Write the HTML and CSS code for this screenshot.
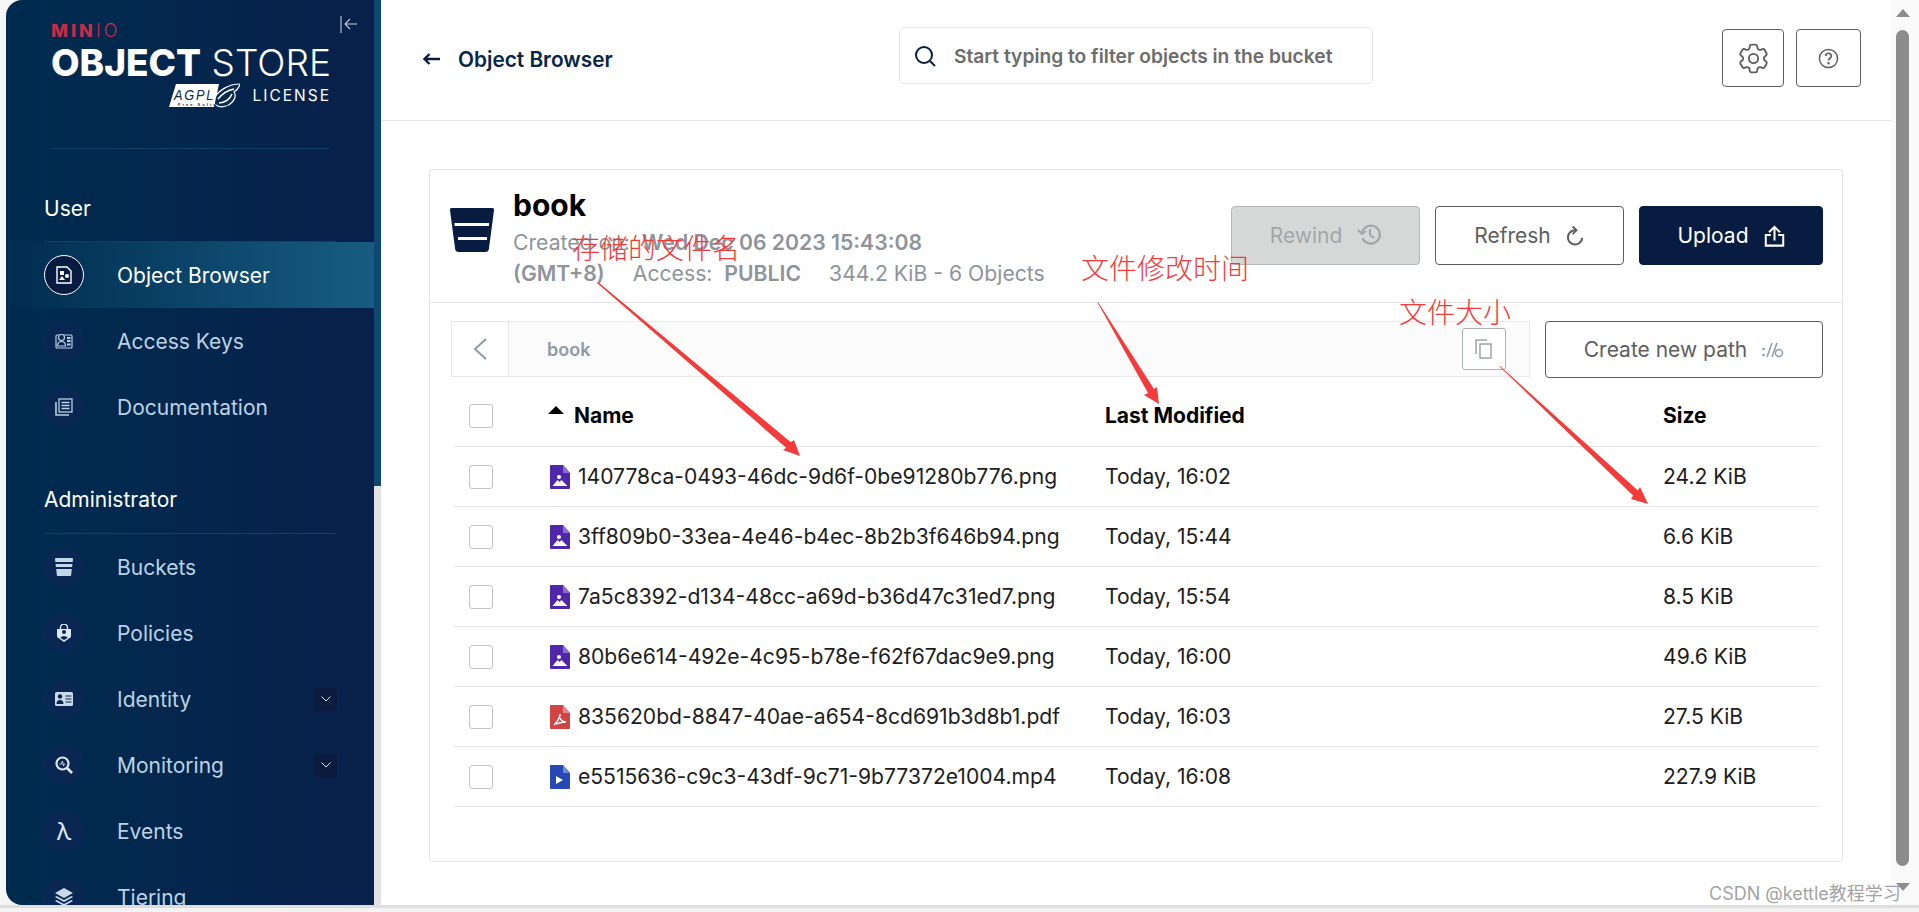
FILE: index.html
```html
<!DOCTYPE html>
<html lang="en">
<head>
    <meta charset="UTF-8">
    <title>MinIO Object Store - book</title>
    <link rel="stylesheet" href="styles.css">
</head>
<body>

<div class="window">
    <div class="app">
        <aside class="sidebar">
            <div class="logo">
                <div class="logo-minio">MIN<span class="logo-io">IO</span></div>
                <div class="logo-title"><b>OBJECT</b> STORE</div>
                <div class="logo-license">
                    <svg class="agpl" viewBox="0 0 71 25">
                        <path d="M43 18C49 7 60 1 71 1C70 5 68 7 65 9C68 13 65 20 57 23C52 25 46 23 43 18Z" fill="#0a2a50" stroke="#fff" stroke-width="1.200"/>
                        <path d="M49 16C54 10 59 7 65 6M50 20C56 20 61 16 63 11" stroke="#fff" stroke-width="1.600" fill="none"/>
                        <polygon points="7,1 50,1 45,24 0,24" fill="#fff"/>
                        <text x="5" y="17" class="agpl-text" textLength="41" lengthAdjust="spacingAndGlyphs">AGPL</text>
                        <text x="9" y="22.500" class="agpl-small">Free Software</text>
                    </svg>
                    <span>LICENSE</span>
                </div>
            </div>
            <button class="collapse">
                <svg viewBox="0 0 18 18" width="18" height="18" fill="none" stroke="#c5ced8" stroke-width="1.100"><path d="M1 1v17M17 9H5M10 4L5 9l5 5"/></svg>
            </button>
            <div class="logo-line"></div>

            <div class="nav-title">User</div>
            <a class="nav-item active">
                <span class="nav-icon">
                    <svg viewBox="0 0 18 18" width="18" height="18"><path d="M2 1h10l4 4v12H2z" fill="none" stroke="#fff" stroke-width="1.400"/><rect x="5" y="5" width="4" height="4" fill="#fff"/><circle cx="12" cy="10" r="2" fill="#fff"/><path d="M7 10l3 4H4z" fill="#fff"/></svg>
                </span>
                Object Browser
            </a>
            <a class="nav-item">
                <span class="nav-icon">
                    <svg viewBox="0 0 18 18" width="18" height="18" fill="none" stroke="#b7cfe2" stroke-width="1.200"><rect x="1" y="3" width="16" height="13" rx="1"/><circle cx="6.500" cy="5.500" r="3" fill="#0a2550"/><path d="M2.500 14c0-3 2-4.500 4-4.500s4 1.500 4 4.500z"/><path d="M12 6h3.500M12 9h3.500M12 12.500h3.500" stroke-width="1.800"/></svg>
                </span>
                Access Keys
            </a>
            <a class="nav-item">
                <span class="nav-icon">
                    <svg viewBox="0 0 18 18" width="18" height="18" fill="none" stroke="#b7cfe2" stroke-width="1.300"><rect x="4" y="1" width="13" height="13"/><path d="M6.500 4.500h8M6.500 7.500h8M6.500 10.500h8"/><path d="M1 4v13h13" stroke-width="1.600"/></svg>
                </span>
                Documentation
            </a>

            <div class="nav-title nav-title-admin">Administrator</div>
            <a class="nav-item">
                <span class="nav-icon">
                    <svg viewBox="0 0 18 18" width="18" height="18" fill="#c3d7e7"><path d="M1 0h16a1 1 0 011 1l-.3 3H.3L0 1a1 1 0 011-1zM.6 6h16.800l-.3 3H.9zM1.200 11h15.600l-.6 6a1 1 0 01-1 1H2.800a1 1 0 01-1-1z"/></svg>
                </span>
                Buckets
            </a>
            <a class="nav-item">
                <span class="nav-icon">
                    <svg viewBox="0 0 18 18" width="18" height="18"><path d="M5.500 5V3.500a3.500 3.500 0 017 0V5" fill="none" stroke="#dbe7f1" stroke-width="1.400"/><path d="M2 5h14v8l-7 5-7-5z" fill="#dbe7f1"/><circle cx="9" cy="8" r="2" fill="#0a2550"/><path d="M5.500 14c0-2.500 7-2.500 7 0l-3.500 2z" fill="#0a2550"/></svg>
                </span>
                Policies
            </a>
            <a class="nav-item">
                <span class="nav-icon">
                    <svg viewBox="0 0 18 14" width="18" height="14"><rect width="18" height="14" rx="1.500" fill="#c9dbe9"/><circle cx="5" cy="4.500" r="2.200" fill="#0a2550"/><path d="M1.500 12c0-3 1.500-4 3.500-4s3.500 1 3.500 4z" fill="#0a2550"/><path d="M10.500 4h6M10.500 7h6M10.500 10h6" stroke="#0a2550" stroke-width="1.100"/></svg>
                </span>
                Identity
                <span class="nav-chevron"><svg viewBox="0 0 10 6" width="10" height="6" fill="none" stroke="#dde8f0" stroke-width="1"><path d="M.5.5L5 5 9.500.5"/></svg></span>
            </a>
            <a class="nav-item">
                <span class="nav-icon">
                    <svg viewBox="0 0 18 18" width="18" height="18" fill="none" stroke="#dbe7f1"><circle cx="7.500" cy="7.500" r="6" stroke-width="2.200"/><path d="M12 12l5 5" stroke-width="2.600"/><path d="M4.500 8h2l1-3 1 5 .8-2h1" stroke-width=".9"/></svg>
                </span>
                Monitoring
                <span class="nav-chevron"><svg viewBox="0 0 10 6" width="10" height="6" fill="none" stroke="#dde8f0" stroke-width="1"><path d="M.5.5L5 5 9.500.5"/></svg></span>
            </a>
            <a class="nav-item">
                <span class="nav-icon nav-lambda">λ</span>
                Events
            </a>
            <a class="nav-item">
                <span class="nav-icon">
                    <svg viewBox="0 0 18 18" width="18" height="18" fill="#c9dbe9"><path d="M9 0l9 5-9 5-9-5z"/><path d="M1.500 8L9 12l7.500-4L18 9l-9 5-9-5z"/><path d="M1.500 12L9 16l7.500-4L18 13l-9 5-9-5z"/></svg>
                </span>
                Tiering
            </a>
        </aside>
        <div class="sidebar-scroll"></div>

        <main class="main">
            <header class="topbar">
                <div class="back">
                    <svg viewBox="0 0 18 12" width="18" height="12" fill="none" stroke="#081c42" stroke-width="2.400"><path d="M17 6H2M6.500 1L1.500 6l5 5"/></svg>
                    <span>Object Browser</span>
                </div>
                <div class="search">
                    <svg viewBox="0 0 22 22" width="22" height="22" fill="none" stroke="#081c42" stroke-width="2"><circle cx="10" cy="10" r="8"/><path d="M16 16l5 5"/></svg>
                    <span>Start typing to filter objects in the bucket</span>
                </div>
                <button class="top-btn gear-btn">
                    <svg viewBox="0 0 24 24" width="37" height="37" fill="none" stroke="#5e5e5e" stroke-width="1.200"><path d="M9.594 3.940c.09-.542.56-.94 1.110-.94h2.593c.55 0 1.020.398 1.110.94l.213 1.281c.063.374.313.686.645.870.074.04.147.083.22.127.324.196.72.257 1.075.124l1.217-.456a1.125 1.125 0 011.370.49l1.296 2.247a1.125 1.125 0 01-.26 1.431l-1.003.827c-.293.24-.438.613-.431.992a6.759 6.759 0 010 .255c-.007.378.138.75.43.99l1.005.828c.424.35.534.954.26 1.430l-1.298 2.247a1.125 1.125 0 01-1.369.491l-1.217-.456c-.355-.133-.75-.072-1.076.124a6.570 6.570 0 01-.22.128c-.331.183-.581.495-.644.869l-.213 1.280c-.09.543-.56.941-1.110.941h-2.594c-.55 0-1.020-.398-1.110-.94l-.213-1.281c-.062-.374-.312-.686-.644-.87a6.520 6.520 0 01-.22-.127c-.325-.196-.72-.257-1.076-.124l-1.217.456a1.125 1.125 0 01-1.369-.49l-1.297-2.247a1.125 1.125 0 01.26-1.431l1.004-.827c.292-.24.437-.613.43-.992a6.932 6.932 0 010-.255c.007-.378-.138-.75-.43-.99l-1.004-.828a1.125 1.125 0 01-.26-1.430l1.297-2.247a1.125 1.125 0 011.370-.491l1.216.456c.356.133.751.072 1.076-.124.072-.044.146-.087.22-.128.332-.183.582-.495.644-.869l.214-1.281z"/><circle cx="12" cy="12" r="3"/></svg>
                </button>
                <button class="top-btn help-btn">
                    <svg viewBox="0 0 22 22" width="21" height="21" fill="none" stroke="#5e5e5e" stroke-width="1.500"><circle cx="11" cy="11" r="9.500"/><path d="M8 8.500a3 3 0 116 0c0 2-3 2.500-3 4.500" stroke-width="1.800"/><circle cx="11" cy="16" r=".6" fill="#5e5e5e"/></svg>
                </button>
            </header>

            <section class="panel">
                <div class="panel-head">
                    <svg class="bucket" viewBox="0 0 44 44" width="44" height="44"><path d="M2 0h40a2 2 0 012 2.300L39 40a4 4 0 01-4 4H9a4 4 0 01-4-4L0 2.300A2 2 0 012 0z" fill="#081c42"/><rect x="4.500" y="15" width="34.500" height="3" fill="#fff"/><rect x="8" y="29" width="29" height="3" fill="#fff"/></svg>
                    <div class="bucket-info">
                        <h1>book</h1>
                        <div class="info-line">Created on:&nbsp; <b>Wed Dec 06 2023 15:43:08</b></div>
                        <div class="info-line"><b>(GMT+8)</b><span class="access">Access:&nbsp; <b>PUBLIC</b></span><span class="usage">344.2 KiB - 6 Objects</span></div>
                    </div>
                    <div class="head-btns">
                        <button class="btn btn-off">Rewind
                            <svg class="rewind-icon" viewBox="0 0 24 22" width="24" height="22" fill="none" stroke="#a3a6a8" stroke-width="2.200"><path d="M5 10a9 9 0 11.5 5"/><path d="M1 7l4 4 4-3" stroke-width="2"/><path d="M13 6v6l4 3" stroke-width="2"/></svg>
                        </button>
                        <button class="btn">Refresh
                            <svg viewBox="0 0 20 22" width="19" height="22" fill="none" stroke="#5e5e5e" stroke-width="2.200"><path d="M17 13a7.500 7.500 0 11-7.500-8"/><path d="M7 1l4 4-4 4" stroke-width="2"/></svg>
                        </button>
                        <button class="btn btn-dark">Upload
                            <svg viewBox="0 0 22 24" width="21" height="22" fill="none" stroke="#fff" stroke-width="2.200"><path d="M11 17V2M5 8l6-6 6 6"/><path d="M7 11H1.500v11.500h19V11H15"/></svg>
                        </button>
                    </div>
                </div>

                <div class="path-row">
                    <div class="crumbs">
                        <span class="crumb-back"><svg viewBox="0 0 16 24" width="16" height="24" fill="none" stroke="#8e9aa5" stroke-width="2"><path d="M14 2L3 12l11 10"/></svg></span>
                        <span class="crumb-name">book</span>
                        <button class="copy-btn">
                            <svg viewBox="0 0 20 20" width="20" height="20" fill="none" stroke="#9aa3ab" stroke-width="1.500"><path d="M2 15V1h11"/><rect x="6" y="5" width="11" height="14"/></svg>
                        </button>
                    </div>
                    <button class="btn btn-path">Create new path
                        <svg viewBox="0 0 22 16" width="22" height="16" fill="none" stroke="#8e9aa5" stroke-width="1.500"><circle cx="1.500" cy="7" r="1.300" fill="#8e9aa5" stroke="none"/><circle cx="1.500" cy="13" r="1.300" fill="#8e9aa5" stroke="none"/><path d="M10 1L5 15M15 1L10 15"/><circle cx="17" cy="11" r="3.500"/></svg>
                    </button>
                </div>

                <div class="objects">
                    <div class="row row-head">
                        <span class="check"></span>
                        <span class="cell-name"><span class="sort-up"></span>Name</span>
                        <span>Last Modified</span>
                        <span>Size</span>
                    </div>
                    <div class="row">
                        <span class="check"></span>
                        <span class="cell-name"><svg class="file" viewBox="0 0 20 24"><path d="M1 0h12l7 8v15a1 1 0 01-1 1H1a1 1 0 01-1-1V1a1 1 0 011-1z" fill="#5027ab"/><path d="M13 0l7 8h-7z" fill="#8a6ed0"/><circle cx="9" cy="12" r="2" fill="#fff"/><path d="M2.500 21l5-6 2 2 2-2 6 6z" fill="#fff"/></svg>140778ca-0493-46dc-9d6f-0be91280b776.png</span>
                        <span>Today, 16:02</span>
                        <span>24.2 KiB</span>
                    </div>
                    <div class="row">
                        <span class="check"></span>
                        <span class="cell-name"><svg class="file" viewBox="0 0 20 24"><path d="M1 0h12l7 8v15a1 1 0 01-1 1H1a1 1 0 01-1-1V1a1 1 0 011-1z" fill="#5027ab"/><path d="M13 0l7 8h-7z" fill="#8a6ed0"/><circle cx="9" cy="12" r="2" fill="#fff"/><path d="M2.500 21l5-6 2 2 2-2 6 6z" fill="#fff"/></svg>3ff809b0-33ea-4e46-b4ec-8b2b3f646b94.png</span>
                        <span>Today, 15:44</span>
                        <span>6.6 KiB</span>
                    </div>
                    <div class="row">
                        <span class="check"></span>
                        <span class="cell-name"><svg class="file" viewBox="0 0 20 24"><path d="M1 0h12l7 8v15a1 1 0 01-1 1H1a1 1 0 01-1-1V1a1 1 0 011-1z" fill="#5027ab"/><path d="M13 0l7 8h-7z" fill="#8a6ed0"/><circle cx="9" cy="12" r="2" fill="#fff"/><path d="M2.500 21l5-6 2 2 2-2 6 6z" fill="#fff"/></svg>7a5c8392-d134-48cc-a69d-b36d47c31ed7.png</span>
                        <span>Today, 15:54</span>
                        <span>8.5 KiB</span>
                    </div>
                    <div class="row">
                        <span class="check"></span>
                        <span class="cell-name"><svg class="file" viewBox="0 0 20 24"><path d="M1 0h12l7 8v15a1 1 0 01-1 1H1a1 1 0 01-1-1V1a1 1 0 011-1z" fill="#5027ab"/><path d="M13 0l7 8h-7z" fill="#8a6ed0"/><circle cx="9" cy="12" r="2" fill="#fff"/><path d="M2.500 21l5-6 2 2 2-2 6 6z" fill="#fff"/></svg>80b6e614-492e-4c95-b78e-f62f67dac9e9.png</span>
                        <span>Today, 16:00</span>
                        <span>49.6 KiB</span>
                    </div>
                    <div class="row">
                        <span class="check"></span>
                        <span class="cell-name"><svg class="file" viewBox="0 0 20 24"><path d="M1 0h12l7 8v15a1 1 0 01-1 1H1a1 1 0 01-1-1V1a1 1 0 011-1z" fill="#d24545"/><path d="M13 0l7 8h-7z" fill="#e58a8a"/><path d="M10 9c0 4-3 8-6 11M10 13c1.500 3 3.500 4 6 4-3 0-6 .5-10 2" fill="none" stroke="#fff" stroke-width="1.500"/></svg>835620bd-8847-40ae-a654-8cd691b3d8b1.pdf</span>
                        <span>Today, 16:03</span>
                        <span>27.5 KiB</span>
                    </div>
                    <div class="row">
                        <span class="check"></span>
                        <span class="cell-name"><svg class="file" viewBox="0 0 20 24"><path d="M1 0h12l7 8v15a1 1 0 01-1 1H1a1 1 0 01-1-1V1a1 1 0 011-1z" fill="#2548b5"/><path d="M13 0l7 8h-7z" fill="#7088d6"/><path d="M6 11l7 4-7 4z" fill="#fff"/></svg>e5515636-c9c3-43df-9c71-9b77372e1004.mp4</span>
                        <span>Today, 16:08</span>
                        <span>227.9 KiB</span>
                    </div>
                </div>
            </section>
        </main>

        <div class="page-scroll">
            <span class="scroll-up"></span>
            <span class="scroll-thumb"></span>
            <span class="scroll-down"></span>
        </div>
    </div>
    <div class="bottom-edge"></div>
</div>

<!-- red notes drawn over the screenshot -->
<svg class="arrows" viewBox="0 0 1919 912" width="1919" height="912">
    <polygon points="598,282 790.800,442.300 794,440 800,456 783,450 786.200,447.700 597,283" fill="#f53a3a"/>
    <polygon points="1098,302 1154,389 1157,387 1159,404 1144,395 1148,393 1097.500,302.500" fill="#f53a3a"/>
    <polygon points="1500,366 1637.900,490.400 1640,487 1648,504 1631,499 1633.100,495.600 1499.500,366.500" fill="#f53a3a"/>
</svg>
<div class="note note-name">存储的文件名</div>
<div class="note note-time">文件修改时间</div>
<div class="note note-size">文件大小</div>
<div class="watermark">CSDN @kettle教程学习</div>

</body>
</html>
```

FILE: styles.css
```css
* {
    box-sizing: border-box;
}

body {
    margin: 0;
    width: 1919px;
    height: 912px;
    overflow: hidden;
    position: relative;
    background-color: #fff;
    font-family: Inter, "Noto Sans CJK SC", sans-serif;
    color: #1c1c1c;
}

button {
    font-family: inherit;
    cursor: pointer;
}

.window {
    display: flex;
    flex-direction: column;
    height: 912px;
    background-color: #f6f6f6;
}

.app {
    display: flex;
    height: 905px;
    padding-left: 6px;
}

/* Sidebar */
.sidebar {
    position: relative;
    width: 368px;
    overflow: hidden;
    flex-shrink: 0;
    border-radius: 16px 0 0 16px;
    background: linear-gradient(90deg, #002c50, #08204a);
    color: #bcd2e4;
}

.sidebar-scroll {
    width: 7px;
    flex-shrink: 0;
    background: linear-gradient(#0f4873 0, #0f4873 486px, #e2e2e2 486px);
}

.logo {
    height: 148px;
    padding: 23px 0 0 45px;
    color: #fff;
}

.logo-minio {
    font-size: 18px;
    line-height: 16px;
    font-weight: 800;
    letter-spacing: 3px;
    color: #c72c48;
}

.logo-io {
    font-weight: 300;
}

.logo-title {
    margin-top: 2px;
    font-size: 37px;
    line-height: 44px;
    font-weight: 300;
    white-space: nowrap;
}

.logo-title b {
    font-weight: 800;
}

.logo-license {
    display: flex;
    align-items: center;
    justify-content: flex-end;
    gap: 12px;
    width: 280px;
    margin-top: -2px;
    font-size: 15.5px;
    letter-spacing: 2px;
}

.agpl {
    width: 71px;
    height: 25px;
}

.agpl-text {
    font-family: "Liberation Sans", sans-serif;
    font-size: 15px;
    font-style: italic;
    fill: #0a2a50;
}

.agpl-small {
    font-family: "Liberation Sans", sans-serif;
    font-size: 4px;
    font-weight: 700;
    fill: #0a2a50;
}

.collapse {
    position: absolute;
    top: 15px;
    left: 334px;
    width: 18px;
    height: 18px;
    padding: 0;
    border: none;
    background: none;
}

.logo-line {
    height: 1px;
    margin: 0 45px;
    background-color: #123f66;
}

.nav-title {
    height: 93px;
    margin: 0 37px 0 38px;
    padding-top: 48px;
    border-bottom: 1px solid #123f66;
    font-size: 21px;
    line-height: 24px;
    color: #fff;
}

.nav-title-admin {
    height: 94px;
}

.nav-item {
    display: flex;
    align-items: center;
    height: 66px;
    padding: 0 37px 0 38px;
    font-size: 21px;
}

.nav-item.active {
    background: linear-gradient(90deg, #002c50, #185c82);
    color: #fff;
}

.nav-icon {
    display: flex;
    align-items: center;
    justify-content: center;
    width: 40px;
    height: 40px;
    margin-right: 33px;
    border: 1px solid #0c2a58;
    border-radius: 50%;
    background-color: #0a2753;
}

.active .nav-icon {
    border-color: #fff;
    background-color: #081c42;
}

.nav-lambda {
    font-size: 24px;
    color: #dbe7f1;
}

.nav-chevron {
    display: flex;
    align-items: center;
    justify-content: center;
    width: 23px;
    height: 23px;
    margin-left: auto;
    border-radius: 3px;
    background-color: #0a1b3e;
}

/* Main area */
.main {
    flex: 1;
    background-color: #fff;
}

.topbar {
    display: flex;
    align-items: flex-start;
    height: 121px;
    padding: 27px 30px 0 42px;
    border-bottom: 1px solid #e5e5e5;
}

.back {
    display: flex;
    align-items: center;
    gap: 17px;
    width: 476px;
    height: 64px;
    font-size: 20.8px;
    font-weight: 600;
    color: #07264a;
}

.search {
    display: flex;
    align-items: center;
    gap: 18px;
    width: 474px;
    height: 57px;
    padding-left: 14px;
    border: 1px solid #e5e5e5;
    border-radius: 5px;
    font-size: 19.2px;
    font-weight: 600;
    color: #6c6c6c;
    white-space: nowrap;
}

.top-btn {
    display: flex;
    align-items: center;
    justify-content: center;
    height: 58px;
    margin-top: 2px;
    padding: 0;
    border: 1px solid #5e5e5e;
    border-radius: 4px;
    background: #fff;
}

.gear-btn {
    width: 62px;
    margin-left: auto;
}

.help-btn {
    width: 65px;
    margin-left: 12px;
}

.panel {
    height: 693px;
    margin: 48px 48px 0;
    border: 1px solid #e5e5e5;
    border-radius: 3px;
}

.panel-head {
    display: flex;
    align-items: flex-start;
    height: 133px;
    padding: 0 19px 0 20px;
    border-bottom: 1px solid #e5e5e5;
}

.bucket {
    margin-top: 38px;
    flex-shrink: 0;
}

.bucket-info {
    margin-left: 19px;
    padding-top: 18px;
    color: #8e949a;
}

.bucket-info h1 {
    margin: 0 0 5px;
    font-size: 30px;
    line-height: 34px;
    font-weight: 700;
    color: #000;
}

.info-line {
    font-size: 21.2px;
    line-height: 31px;
    white-space: nowrap;
}

.info-line b {
    font-weight: 600;
}

.access {
    margin-left: 28px;
}

.usage {
    margin-left: 28px;
}

.head-btns {
    display: flex;
    gap: 15px;
    margin: 36px 0 0 auto;
}

.btn {
    display: flex;
    align-items: center;
    justify-content: center;
    gap: 15px;
    width: 189px;
    height: 59px;
    padding: 0;
    border: 1px solid #5e5e5e;
    border-radius: 4px;
    background: #fff;
    font-size: 21px;
    color: #5e5e5e;
}

.btn-off {
    border-color: #b5b7b8;
    background-color: #d6d8d8;
    color: #a3a6a8;
}

.rewind-icon {
    margin-top: -4px;
}

.btn-dark {
    width: 184px;
    border-color: #081c42;
    background-color: #081c42;
    color: #fff;
}

.path-row {
    display: flex;
    gap: 15px;
    height: 57px;
    margin-top: 18px;
    padding: 0 19px 0 21px;
}

.crumbs {
    display: flex;
    align-items: center;
    flex: 1;
    height: 56px;
    border: 1px solid #e8e8e8;
    background-color: #fbfbfb;
}

.crumb-back {
    display: flex;
    align-items: center;
    justify-content: center;
    width: 57px;
    height: 100%;
    border-right: 1px solid #e8e8e8;
    background-color: #fff;
}

.crumb-name {
    margin-left: 38px;
    font-size: 18px;
    font-weight: 600;
    color: #8e9aa5;
}

.copy-btn {
    display: flex;
    align-items: center;
    justify-content: center;
    width: 44px;
    height: 42px;
    margin-left: auto;
    margin-right: 23px;
    padding: 0;
    border: 1px solid #a9b0b6;
    border-radius: 3px;
    background: #fff;
}

.btn-path {
    width: 278px;
    height: 57px;
}

.objects {
    width: 1365px;
    margin: 1px 0 0 24px;
}

.row {
    display: grid;
    grid-template-columns: 94px 557px 558px 156px;
    align-items: center;
    height: 60px;
    border-bottom: 1px solid #e5e5e5;
    font-size: 21.1px;
    color: #1c1c1c;
}

.row-head {
    height: 68px;
    padding-top: 6px;
    font-size: 21px;
    font-weight: 700;
    color: #000;
}

.check {
    width: 24px;
    height: 24px;
    margin-left: 15px;
    border: 1px solid #c4c4c4;
    border-radius: 3px;
    background: #fff;
}

.cell-name {
    display: flex;
    align-items: center;
    white-space: nowrap;
}

.file {
    width: 20px;
    height: 24px;
    margin: 0 8px 0 2px;
    flex-shrink: 0;
}

.sort-up {
    width: 0;
    height: 0;
    margin: -11px 10px 0 0;
    border-left: 8px solid transparent;
    border-right: 8px solid transparent;
    border-bottom: 8px solid #000;
}

.page-scroll {
    position: relative;
    width: 28px;
    flex-shrink: 0;
    background-color: #fafafa;
}

.scroll-up {
    position: absolute;
    top: 9px;
    left: 5px;
    border-left: 7px solid transparent;
    border-right: 7px solid transparent;
    border-bottom: 8px solid #8c8c8c;
}

.scroll-thumb {
    position: absolute;
    top: 30px;
    left: 5px;
    width: 13px;
    height: 836px;
    border-radius: 7px;
    background-color: #8c8c8c;
}

.scroll-down {
    position: absolute;
    top: 883px;
    left: 5px;
    border-left: 7px solid transparent;
    border-right: 7px solid transparent;
    border-top: 8px solid #8c8c8c;
}

.bottom-edge {
    height: 7px;
    border-top: 3px solid #dedede;
    background-color: #f3f3f3;
}

/* Notes and arrows over the page */
.arrows {
    position: absolute;
    top: 0;
    left: 0;
    pointer-events: none;
}

.note {
    position: absolute;
    font-family: "Noto Sans CJK SC", sans-serif;
    font-size: 28px;
    line-height: 36px;
    font-weight: 300;
    color: #f5393b;
    white-space: nowrap;
}

.note-name {
    top: 229px;
    left: 572px;
}

.note-time {
    top: 249px;
    left: 1081px;
}

.note-size {
    top: 293px;
    left: 1399px;
}

.watermark {
    position: absolute;
    top: 881px;
    left: 1709px;
    font-size: 18px;
    line-height: 26px;
    color: rgba(120, 120, 120, 0.7);
    white-space: nowrap;
}
```
